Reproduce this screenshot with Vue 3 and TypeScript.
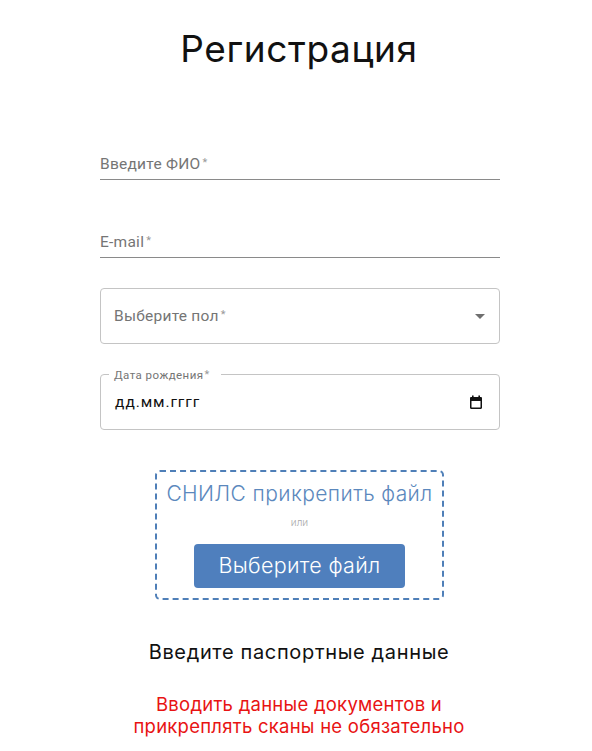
<script setup lang="ts">
</script>

<template>
  <main class="page">
    <h1 class="title">Регистрация</h1>
    <form class="form">
      <div class="line-field first"><span class="lbl">Введите ФИО<i>*</i></span></div>
      <div class="line-field second"><span class="lbl">E-mail<i>*</i></span></div>
      <div class="box select">
        <span class="lbl">Выберите пол<i>*</i></span>
        <svg class="caret" width="10" height="5" viewBox="0 0 10 5"><path d="M0 0h10L5 5z" fill="#6f6f6f" /></svg>
      </div>
      <div class="box date">
        <span class="legend">Дата рождения<i>*</i></span>
        <span class="value">дд.мм.гггг</span>
        <svg class="cal" width="14" height="15" viewBox="0 0 14 15"><path d="M1 3.2c0-.7.5-1.2 1.2-1.2H3V.5h1.6V2h4.800V.5H11V2h.8c.7 0 1.200.5 1.200 1.200v9.600c0 .7-.5 1.200-1.200 1.200H2.200C1.500 14 1 13.500 1 12.800zM2.500 6v6.500h9V6z" fill="#111" /></svg>
      </div>
    </form>
    <section class="upload">
      <div class="upload-title">СНИЛС прикрепить файл</div>
      <div class="or">или</div>
      <button type="button" class="pick">Выберите файл</button>
    </section>
    <p class="passport">Введите паспортные данные</p>
    <p class="warn">Вводить данные документов и прикреплять сканы не обязательно</p>
  </main>
</template>

<style>
html, body { margin: 0; background: #fff; }
</style>

<style scoped>
.page { width: 592px; height: 751px; overflow: hidden; display: flex; flex-direction: column; align-items: center; font-family: Inter, sans-serif; }
.title { margin: 26px 0 0; font: 400 37px/46px Inter, sans-serif; letter-spacing: 0.6px; color: #111; position: relative; left: 3px; }
.form { width: 400px; margin-top: 72px; position: relative; left: 4px; display: flex; flex-direction: column; font-family: Roboto, sans-serif; font-weight: 400; color: #757575; font-size: 15.500px; }
.lbl { letter-spacing: 0.250px; }
.lbl i, .legend i { font-style: normal; color: #999; font-size: 11px; vertical-align: 3px; margin-left: 2px; }
.line-field { height: 36px; border-bottom: 1px solid #8a8a8a; box-sizing: border-box; display: flex; align-items: flex-end; padding-bottom: 6px; }
.line-field.second { margin-top: 42px; }
.box { border: 1px solid #c4c4c4; border-radius: 4px; height: 56px; box-sizing: border-box; display: flex; align-items: center; justify-content: space-between; padding: 0 14px 0 13px; position: relative; }
.select { margin-top: 30px; }
.date { margin-top: 30px; }
.legend { position: absolute; top: -8px; left: 8px; background: #fff; padding: 0 11px 0 5px; font-size: 11.500px; line-height: 15px; letter-spacing: 0.450px; }
.legend i { vertical-align: 1px; margin-left: 1px; }
.value { color: #111; font-size: 15.500px; letter-spacing: 0.900px; position: relative; left: 1px; }
.cal { position: relative; left: -2px; }
.upload { width: 289px; height: 130px; box-sizing: border-box; margin-top: 40px; border: 2px dashed #4f7fb8; border-radius: 5px; display: flex; flex-direction: column; align-items: center; position: relative; left: 3.500px; }
.upload-title { font: 300 21px/26px Inter, sans-serif; letter-spacing: 0.400px; color: #5b88bd; margin-top: 9px; white-space: nowrap; }
.or { font: 300 10px/14px Inter, sans-serif; color: #a9a9a9; margin-top: 8px; }
.pick { margin-top: 15px; width: 211px; height: 44px; background: #4f7fbd; color: #fff; border: 0; border-radius: 4px; font: 300 21.500px/1 Inter, sans-serif; letter-spacing: 0.300px; padding: 0; }
.passport { margin: 39px 0 0; font: 400 20px/26px Inter, sans-serif; letter-spacing: 0.650px; color: #111; position: relative; left: 3px; }
.warn { margin: 28px 0 0; width: 360px; text-align: center; font: 400 18.500px/22px Inter, sans-serif; letter-spacing: 0.250px; color: #e81313; position: relative; left: 3px; }
</style>
